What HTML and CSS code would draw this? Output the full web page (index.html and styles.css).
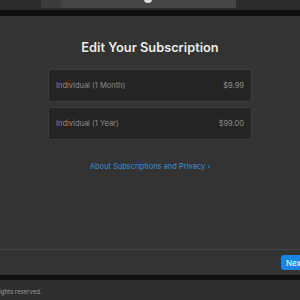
FILE: index.html
```html
<!DOCTYPE html>
<html lang="en">
<head>
  <meta charset="UTF-8" />
  <meta name="viewport" content="width=device-width, initial-scale=1" />
  <title>Edit Your Subscription</title>
  <link rel="stylesheet" href="styles.css">
</head>
<body>
  <div class="topbar">
    <div class="search">
      <span class="search-btn"></span>
      <span class="dot"></span>
    </div>
  </div>
  <div class="band"></div>

  <div class="modal">
    <h1>Edit Your Subscription</h1>

    <div class="plans">
      <div class="plan">
        <span>Individual (1 Month)</span>
        <span>$9.99</span>
      </div>
      <div class="plan">
        <span>Individual (1 Year)</span>
        <span>$99.00</span>
      </div>
    </div>

    <a class="link" href="#">About Subscriptions and Privacy ›</a>

    <div class="footer">
      <button class="button">Next</button>
    </div>
  </div>

  <div class="band band-bottom"></div>
  <div class="copyright">rights reserved.</div>
</body>
</html>
```

FILE: styles.css
```css
body {
  margin: 0;
  background: #2e2e2e;
  font-family: Inter, 'Helvetica Neue', sans-serif;
  width: 300px;
  height: 300px;
  overflow: hidden;
}
.topbar {
  height: 10px;
  background: #2b2b2b;
  padding-left: 41px;
}
.search {
  position: relative;
  width: 195px;
  height: 8px;
  background: #464646;
  display: flex;
}
.search-btn {
  width: 20px;
  height: 8px;
  background: #3b3b3b;
}
.dot {
  position: absolute;
  left: 103px;
  top: -4px;
  width: 8px;
  height: 7px;
  border-radius: 50%;
  background: #dcdcdc;
}
.band {
  height: 6px;
  background: #0e0e0e;
}
.modal {
  background: #333333;
  height: 259px;
  display: flex;
  flex-direction: column;
  align-items: center;
}
h1 {
  margin: 24px 0 0;
  font-size: 12.8px;
  font-weight: 600;
  color: #ececec;
}
.plans {
  margin-top: 14px;
  display: flex;
  flex-direction: column;
  gap: 5px;
}
.plan {
  width: 188px;
  height: 31px;
  padding: 0 7px;
  background: #242424;
  border: 1px solid #3c3c3c;
  border-radius: 3px;
  display: flex;
  justify-content: space-between;
  align-items: center;
  font-size: 7.5px;
  color: #8c8c8c;
}
.link {
  margin-top: 22px;
  font-size: 7.5px;
  color: #3b8fd3;
  text-decoration: none;
}
.footer {
  margin-top: auto;
  align-self: stretch;
  height: 25px;
  border-top: 1px solid #444;
  display: flex;
  justify-content: flex-end;
  align-items: center;
  overflow: hidden;
}
.button {
  margin-right: -19px;
  height: 15px;
  width: 38px;
  padding: 0 5px;
  border: none;
  border-radius: 3px;
  background: #1b83e2;
  color: #fff;
  font-family: inherit;
  font-size: 8px;
  text-align: left;
}
.band-bottom {
  height: 5px;
}
.copyright {
  padding-top: 8px;
  font-size: 6px;
  color: #9a9a9a;
  margin-left: -3px;
}
```
